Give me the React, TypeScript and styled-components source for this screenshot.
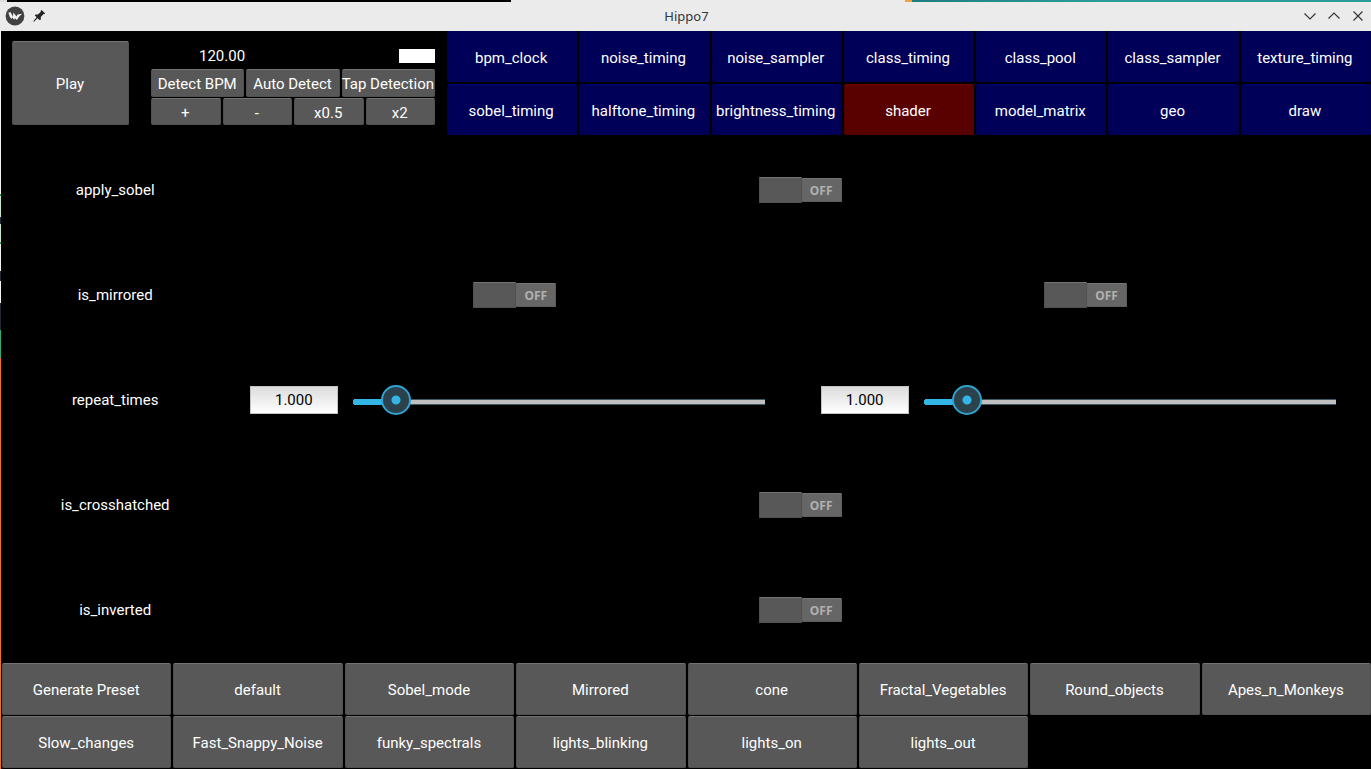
import React, { useId, useState } from "react";
import styled, { createGlobalStyle } from "styled-components";

const GlobalStyle = createGlobalStyle`
  *, *::before, *::after { box-sizing: border-box; }
  body {
    margin: 0;
    background: #000;
    color: #fff;
    font-family: Roboto, "Liberation Sans", sans-serif;
    font-size: 15px;
    line-height: 18px;
  }
  button, input { font: inherit; color: inherit; }
`;

const Desktop = styled.div`
  display: flex;
  flex-direction: column;
  min-height: 100vh;
  background: #000;
`;

const DesktopEdge = styled.div`
  height: 2px;
  background: linear-gradient(
    90deg,
    #dcdcdc 7px,
    #000 7px 511px,
    #ebebeb 511px 905px,
    #f9a03c 905px 912px,
    #1f7d80 912px,
    #2a9d98 80%
  );
`;

const TitleBar = styled.header`
  display: grid;
  grid-template-columns: 1fr auto 1fr;
  align-items: center;
  height: 29px;
  padding: 0 3px 1px 5px;
  background: #ebebeb;
  color: #31363b;
`;

const TitleGroup = styled.div<{ $end?: boolean }>`
  display: flex;
  align-items: center;
  gap: ${(p) => (p.$end ? 4 : 6)}px;
  justify-content: ${(p) => (p.$end ? "flex-end" : "flex-start")};
`;

const Title = styled.h1`
  margin: 0;
  font: 400 13px/18px "Noto Sans", sans-serif;
`;

const IconButton = styled.button`
  display: flex;
  padding: 0;
  border: 0;
  background: none;
`;

const Window = styled.div`
  flex: 1;
  display: flex;
  flex-direction: column;
  padding: 0 0 1px 1px;
  background:
    linear-gradient(
      #f4f4f4 163px,
      #18a558 163px 165px,
      #c9e8d3 165px 186px,
      #232a35 186px 193px,
      #c9e8d3 193px 211px,
      #18a558 211px 213px,
      #f4f4f4 213px 240px,
      #232a35 240px 250px,
      #f4f4f4 250px 272px,
      #232a35 272px 299px,
      #2fae74 299px 327px,
      #f0731a 327px
    ) 0 0 / 1px 100% no-repeat,
    #000;
`;

const TopPanel = styled.div`
  display: grid;
  grid-template-columns: 446px 1fr;
`;

const Transport = styled.section`
  display: grid;
  grid-template-columns: 117px 284px;
  gap: 22px;
  padding: 10px 11px;
`;

const PadButton = styled.button`
  min-width: 0;
  padding: 2px 1px 0 0;
  border: 1px solid #505050;
  border-top-color: #737373;
  border-radius: 2px;
  background: #585858;
  text-align: center;
  white-space: nowrap;
`;

const TempoControls = styled.div`
  display: grid;
  grid-template-rows: 27px 28px 27px;
  row-gap: 1px;
`;

const TempoRow = styled.div<{ $columns: number }>`
  display: grid;
  grid-template-columns: repeat(${(p) => p.$columns}, 1fr);
  column-gap: 2px;
`;

const TempoButton = styled(PadButton)`
  display: flex;
  justify-content: center;
  align-items: center;
`;

const Readout = styled.div`
  display: flex;
  align-items: center;
  justify-content: space-between;
  padding: 2px 0 0 48px;
`;

const BeatLight = styled.div`
  width: 36px;
  height: 14px;
  background: #fff;
`;

const NodeNav = styled.nav`
  display: grid;
  grid-template-columns: repeat(7, 1fr);
  grid-auto-rows: 51px;
  gap: 2px;
`;

const NodeButton = styled(PadButton)<{ $active: boolean }>`
  padding-right: 2px;
  border-color: ${(p) => (p.$active ? "#500000" : "#000050")};
  border-top-color: ${(p) => (p.$active ? "#780000" : "#000074")};
  background: ${(p) => (p.$active ? "#590000" : "#000059")};

  &:nth-child(-n + 7) {
    border-top-color: #000059;
  }
`;

const Parameters = styled.main`
  flex: 1;
  display: grid;
  grid-auto-rows: 1fr;
  padding-top: 2px;
`;

const ParameterRow = styled.div`
  display: grid;
  grid-template-columns: 1fr 5fr;
  align-items: center;
`;

const ParameterName = styled.label`
  text-align: center;
`;

const Cells = styled.div`
  display: flex;
  align-items: center;
`;

const Cell = styled.div`
  flex: 1;
  display: flex;
  align-items: center;
  justify-content: center;
`;

const SwitchBody = styled.label<{ $on: boolean }>`
  position: relative;
  display: flex;
  flex-direction: ${(p) => (p.$on ? "row-reverse" : "row")};
  align-items: center;
  width: 83px;
  height: 26px;
`;

const SwitchInput = styled.input`
  position: absolute;
  inset: 0;
  width: 100%;
  height: 100%;
  margin: 0;
  opacity: 0;
`;

const SwitchHandle = styled.span`
  width: 43px;
  height: 26px;
  border: 1px solid #505050;
  border-top-color: #737373;
  border-radius: 1px;
  background: #585858;
`;

const SwitchState = styled.span<{ $on: boolean }>`
  flex: 1;
  height: 24px;
  border: 1px solid #5c5c5c;
  border-top-color: #757575;
  border-left: 0;
  border-radius: 1px;
  background: ${(p) => (p.$on ? "#2b84a5" : "#666")};
  color: #b0b0b0;
  font: 700 12px/24px "Noto Sans", sans-serif;
  text-align: center;
`;

const SliderCell = styled(Cell)`
  gap: 2px;
  padding: 0 20px 0 21px;
`;

const NumberBox = styled.input`
  width: 88px;
  height: 28px;
  padding: 0 1px 0 0;
  border: 1px solid #c4c4c4;
  border-radius: 0;
  background: linear-gradient(#dcdcdc, #fff);
  color: #000;
  text-align: center;
`;

const Range = styled.input`
  appearance: none;
  flex: 1;
  min-width: 0;
  height: 32px;
  margin: 0;
  background: none;

  &::-webkit-slider-runnable-track {
    height: 30px;
    background:
      radial-gradient(circle at 3px 3px, #33b5e5 3px, transparent 3px) 13px 14px / 3px 6px no-repeat,
      linear-gradient(#33b5e5, #33b5e5) 16px 14px / var(--fill) 6px no-repeat,
      linear-gradient(#3a5a66 1px, #bfbfbf 1px 5px, #3a5a66 5px) 16px 14px / calc(100% - 31px) 6px no-repeat;
  }

  &::-webkit-slider-thumb {
    appearance: none;
    width: 30px;
    height: 30px;
    border: 2px solid #2fa3d0;
    border-radius: 50%;
    background: radial-gradient(circle, #33b5e5 4px, #2b414b 5px);
  }
`;

const PresetGrid = styled.footer`
  display: grid;
  grid-template-columns: repeat(8, 1fr);
  grid-auto-rows: 52px;
  gap: 1px 2px;
  padding-left: 1px;
`;

const nodes = [
  "bpm_clock", "noise_timing", "noise_sampler", "class_timing", "class_pool", "class_sampler", "texture_timing",
  "sobel_timing", "halftone_timing", "brightness_timing", "shader", "model_matrix", "geo", "draw",
];

const presets = [
  "Generate Preset", "default", "Sobel_mode", "Mirrored", "cone", "Fractal_Vegetables", "Round_objects",
  "Apes_n_Monkeys", "Slow_changes", "Fast_Snappy_Noise", "funky_spectrals", "lights_blinking", "lights_on",
  "lights_out",
];

type Parameter = { name: string; kind: "switch" | "slider"; count: number };

const parameters: Parameter[] = [
  { name: "apply_sobel", kind: "switch", count: 1 },
  { name: "is_mirrored", kind: "switch", count: 2 },
  { name: "repeat_times", kind: "slider", count: 2 },
  { name: "is_crosshatched", kind: "switch", count: 1 },
  { name: "is_inverted", kind: "switch", count: 1 },
];

type ControlProps = { id: string; label: string };

function Switch({ id, label }: ControlProps) {
  const [on, setOn] = useState(false);
  return (
    <Cell>
      <SwitchBody $on={on}>
        <SwitchHandle />
        <SwitchState $on={on}>{on ? "ON" : "OFF"}</SwitchState>
        <SwitchInput
          id={id}
          type="checkbox"
          role="switch"
          aria-label={label}
          checked={on}
          onChange={(e) => setOn(e.target.checked)}
        />
      </SwitchBody>
    </Cell>
  );
}

const SLIDER_MAX = 10;

function Slider({ id, label }: ControlProps) {
  const [value, setValue] = useState(1);
  const [draft, setDraft] = useState("1.000");
  const commit = () => {
    const next = Math.min(SLIDER_MAX, Math.max(0, Number(draft) || 0));
    setValue(next);
    setDraft(next.toFixed(3));
  };
  const fill = { "--fill": `calc((100% - 31px) * ${value / SLIDER_MAX})` } as React.CSSProperties;
  return (
    <SliderCell>
      <NumberBox
        id={id}
        type="text"
        aria-label={`${label} value`}
        value={draft}
        onChange={(e) => setDraft(e.target.value)}
        onBlur={commit}
      />
      <Range
        type="range"
        aria-label={label}
        min={0}
        max={SLIDER_MAX}
        step={0.001}
        value={value}
        style={fill}
        onChange={(e) => {
          setValue(Number(e.target.value));
          setDraft(Number(e.target.value).toFixed(3));
        }}
      />
    </SliderCell>
  );
}

function ParameterControls({ parameter }: { parameter: Parameter }) {
  const id = useId();
  const Control = parameter.kind === "switch" ? Switch : Slider;
  return (
    <ParameterRow>
      <ParameterName htmlFor={`${id}-0`}>{parameter.name}</ParameterName>
      <Cells>
        {Array.from({ length: parameter.count }, (_, i) => (
          <Control
            key={i}
            id={`${id}-${i}`}
            label={parameter.count > 1 ? `${parameter.name} ${i + 1}` : parameter.name}
          />
        ))}
      </Cells>
    </ParameterRow>
  );
}

function AppLogo() {
  return (
    <svg width="20" height="20" viewBox="0 0 20 20" aria-hidden="true">
      <circle cx="10" cy="10" r="9.4" fill="#3f4143" />
      <path d="M3.4 6.4 5.6 6.2l2.4 4.6.2-4.400 3.400 4.200.9-2.200 4.700-.6-2.500 2.200-2.900 4-1.700-1.800-.9 1.600-2-2.200-.8 1.400-1.800-2.400z" fill="#f2f2f2" />
    </svg>
  );
}

function PinIcon() {
  return (
    <svg width="16" height="16" viewBox="0 0 16 16" aria-hidden="true">
      <path d="M10.600 2 14 5.200l-.6 1-.9-.1-2.700 3 .1 2.200-1 1L6.500 10.200 3 13.800l-.7-.6L5.600 9.300 3.700 7.300l.9-.9 2.200.1 2.900-2.600-.1-1z" fill="#232629" />
    </svg>
  );
}

function WindowIcon({ d }: { d: string }) {
  return (
    <svg width="20" height="20" viewBox="0 0 20 20" fill="none" stroke="#31363b" strokeWidth="1.200" aria-hidden="true">
      <path d={d} />
    </svg>
  );
}

export default function App() {
  const [active, setActive] = useState("shader");
  return (
    <Desktop>
      <GlobalStyle />
      <DesktopEdge />
      <TitleBar>
        <TitleGroup>
          <AppLogo />
          <IconButton type="button" aria-label="Keep above others"><PinIcon /></IconButton>
        </TitleGroup>
        <Title>Hippo7</Title>
        <TitleGroup $end>
          <IconButton type="button" aria-label="Minimize"><WindowIcon d="M4.500 7.500 10 13l5.500-5.500" /></IconButton>
          <IconButton type="button" aria-label="Maximize"><WindowIcon d="M4.500 12.500 10 7l5.500 5.500" /></IconButton>
          <IconButton type="button" aria-label="Close"><WindowIcon d="m5.500 5.500 9 9m0-9-9 9" /></IconButton>
        </TitleGroup>
      </TitleBar>
      <Window>
        <TopPanel>
          <Transport aria-label="Tempo">
            <PadButton type="button">Play</PadButton>
            <TempoControls>
              <Readout>
                <output>120.00</output>
                <BeatLight />
              </Readout>
              <TempoRow $columns={3}>
                {["Detect BPM", "Auto Detect", "Tap Detection"].map((text) => (
                  <TempoButton type="button" key={text}>{text}</TempoButton>
                ))}
              </TempoRow>
              <TempoRow $columns={4}>
                {["+", "-", "x0.5", "x2"].map((text) => (
                  <TempoButton type="button" key={text}>{text}</TempoButton>
                ))}
              </TempoRow>
            </TempoControls>
          </Transport>
          <NodeNav aria-label="Nodes">
            {nodes.map((name) => (
              <NodeButton
                type="button"
                key={name}
                $active={name === active}
                aria-pressed={name === active}
                onClick={() => setActive(name)}
              >
                {name}
              </NodeButton>
            ))}
          </NodeNav>
        </TopPanel>
        <Parameters>
          {parameters.map((parameter) => (
            <ParameterControls key={parameter.name} parameter={parameter} />
          ))}
        </Parameters>
        <PresetGrid>
          {presets.map((name) => (
            <PadButton type="button" key={name}>{name}</PadButton>
          ))}
        </PresetGrid>
      </Window>
    </Desktop>
  );
}
